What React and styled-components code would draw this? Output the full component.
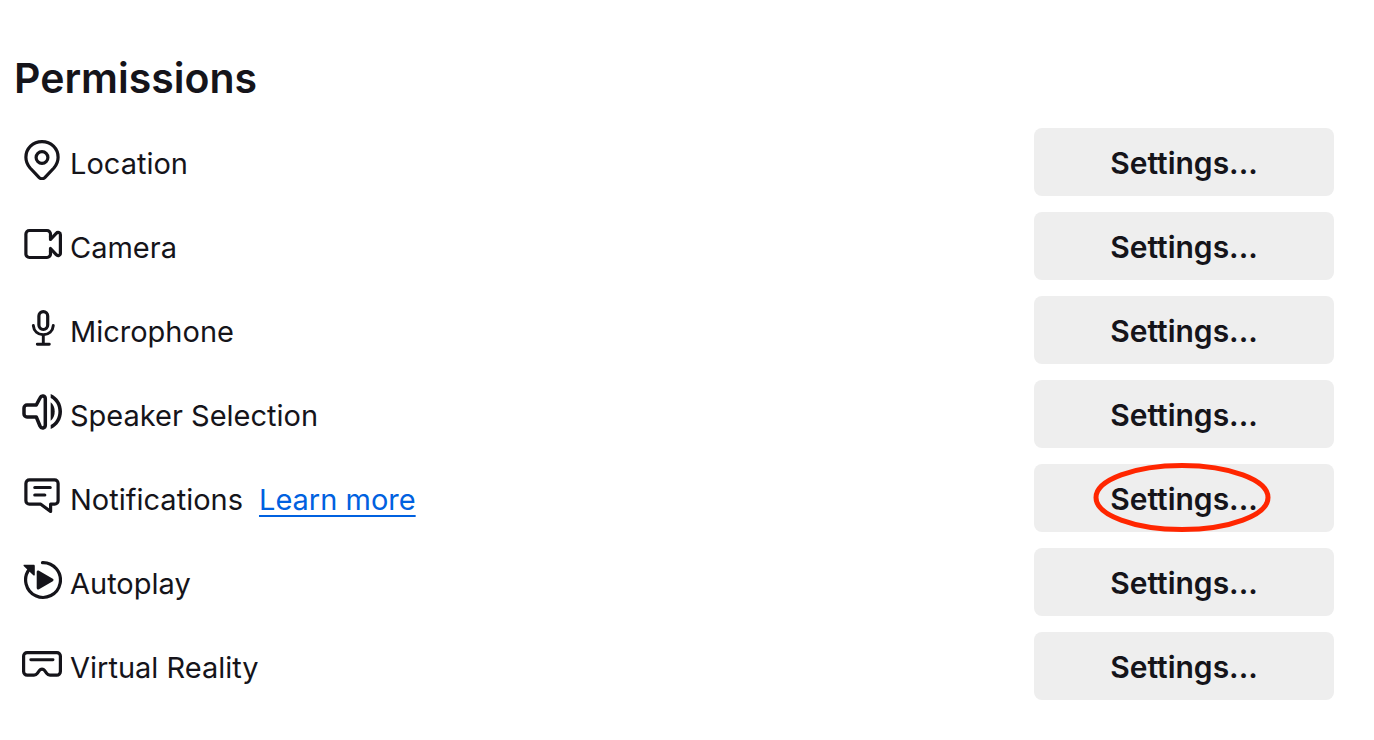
import React from 'react'
import styled, { createGlobalStyle } from 'styled-components';

const GlobalStyle = createGlobalStyle`
*{
  box-sizing: border-box;
}
body{
  margin: 0;
  background-color: #ffffff;
  color: #15141a;
  font-family: Inter, "Liberation Sans", sans-serif;
}
`;

const Page = styled.main`
  padding: 48px 40px 40px 14px;
`;

const Title = styled.h1`
  margin: 0 0 20px 0;
  font-size: 41px;
  line-height: 60px;
  font-weight: 600;
`;

const List = styled.ul`
  margin: 0;
  padding: 0 0 0 8px;
  list-style: none;
  display: flex;
  flex-direction: column;
  gap: 16px;
`;

const Row = styled.li`
  display: flex;
  justify-content: space-between;
  align-items: center;
`;

const Label = styled.div`
  padding-top: 4px;
  display: flex;
  align-items: center;
  gap: 8px;
  font-size: 29px;
  line-height: 40px;
`;

const Icon = styled.svg`
  margin-bottom: 8px;
  width: 40px;
  height: 40px;
  flex: none;
  fill: none;
  stroke: currentColor;
  stroke-width: 3.2;
  stroke-linecap: round;
  stroke-linejoin: round;
  .solid{
    fill: currentColor;
    stroke: none;
  }
`;

const LearnMore = styled.a`
  margin-left: 8px;
  color: #0061e0;
  text-decoration: underline;
  text-decoration-thickness: 2px;
  text-underline-offset: 5px;
`;

const SettingsButton = styled.button`
  position: relative;
  width: 300px;
  height: 68px;
  padding: 2px 0 0 0;
  border: 0;
  border-radius: 8px;
  background-color: #eeeeee;
  color: inherit;
  font-family: inherit;
  font-size: 30px;
  line-height: 40px;
  font-weight: 600;
  &:hover{
    cursor: pointer;
    background-color: #e0e0e6;
  }
`;

const Ring = styled.svg`
  position: absolute;
  top: -2px;
  left: 59px;
  width: 178px;
  height: 71px;
  fill: none;
  stroke: #ff2600;
  stroke-width: 5;
  pointer-events: none;
`;

const icons = {
  location: (
    <>
      <path d="M20 1.6C10.8 1.6 3.9 8.6 3.9 17.3c0 4.300 1.600 7.700 4.200 10.700l9.100 9.600c1.600 1.500 4 1.500 5.600 0l9.100-9.600c2.600-3 4.200-6.400 4.200-10.700C36.100 8.600 29.200 1.600 20 1.600z" />
      <circle cx="20" cy="17.5" r="5.9" />
    </>
  ),
  camera: (
    <>
      <path d="M28.5 13V10A3.5 3.5 0 0 0 25 6.5H7.4A3.5 3.5 0 0 0 3.9 10v20a3.5 3.5 0 0 0 3.5 3.5H25a3.5 3.5 0 0 0 3.5-3.5V27" />
      <path d="M28.500 12.500v3l5.700-6.200c1.600-1.700 4.200-.8 4.200 1.400v18.600c0 2.200-2.600 3.100-4.200 1.400l-5.700-6.200v3" />
    </>
  ),
  microphone: (
    <>
      <rect x="16.9" y="3.7" width="8.8" height="17.8" rx="4.4" />
      <path d="M11.3 17.5c.5 5.500 4.500 9.200 10 9.200s9.500-3.700 10-9.200M21.3 27v9M15.3 36.3h12" strokeWidth="2.9" />
    </>
  ),
  speaker: (
    <>
      <path d="M14.300 13H5a3 3 0 0 0-3 3v6a3 3 0 0 0 3 3h9.300l3.700 9c1.400 3.100 5.300 2.400 5.300-1V7c0-3.400-3.900-4.100-5.300-1z" strokeWidth="3.5" />
      <path className="solid" d="M28.700 10.200c2.700 2.200 4 5.500 4 9.300s-1.300 7.100-4 9.300z" />
      <path className="solid" d="M28.700 2C35.800 5 40 11.800 40 19.500S35.800 34 28.700 37v-3.900c4.900-2.700 7.700-7.600 7.700-13.600s-2.800-10.900-7.700-13.600z" />
    </>
  ),
  notifications: (
    <>
      <path d="M7.400 3.900h25.200a3.500 3.500 0 0 1 3.500 3.500v17.300a3.500 3.500 0 0 1-3.500 3.500h-4v7.300l-9.800-7.300H7.400a3.500 3.500 0 0 1-3.500-3.500V7.400a3.500 3.500 0 0 1 3.500-3.500z" />
      <path d="M12.800 11.500h15.400M12.800 19h10" />
    </>
  ),
  autoplay: (
    <>
      <path d="M20.500 2.600A17.400 17.400 0 1 1 7.300 9.300" />
      <path className="solid" d="M2.300 4.700h9.200c.8 0 1.300.5 1.300 1.300v8.700c0 .9-.9 1.200-1.500.6L1.700 5.900c-.4-.6-.1-1.200.6-1.200z" />
      <path className="solid" d="M14.700 12v16c0 1.300 1.200 1.900 2.300 1.200l13.800-8c1-.6 1-1.800 0-2.400l-13.800-8c-1.100-.7-2.300-.1-2.300 1.200z" />
    </>
  ),
  vr: (
    <>
      <path d="M5.100 8.600h29.800a3.500 3.500 0 0 1 3.500 3.500v15.400a3.600 3.600 0 0 1-3.600 3.600H28c-1.500 0-2.500-.6-3.300-1.700l-2.200-3c-1.300-1.700-3.700-1.700-5 0l-2.200 3c-.8 1.100-1.800 1.700-3.300 1.700H5.200a3.600 3.600 0 0 1-3.600-3.600V12.100a3.500 3.500 0 0 1 3.500-3.500z" />
      <path d="M8.800 15.700H31" strokeWidth="2.900" />
    </>
  ),
};

const permissions = [
  { id: 'location', label: 'Location' },
  { id: 'camera', label: 'Camera' },
  { id: 'microphone', label: 'Microphone' },
  { id: 'speaker', label: 'Speaker Selection' },
  { id: 'notifications', label: 'Notifications', learnMore: true, circled: true },
  { id: 'autoplay', label: 'Autoplay' },
  { id: 'vr', label: 'Virtual Reality' },
];

const App = () => {
  return (
    <Page>
      <GlobalStyle />
      <Title>Permissions</Title>
      <List>
        {permissions.map(({ id, label, learnMore, circled }) => (
          <Row key={id}>
            <Label>
              <Icon viewBox="0 0 40 40" aria-hidden="true">{icons[id]}</Icon>
              <span id={`${id}-label`}>{label}</span>
              {learnMore && <LearnMore href="#notifications">Learn more</LearnMore>}
            </Label>
            <SettingsButton type="button" aria-describedby={`${id}-label`}>
              Settings...
              {circled && (
                <Ring viewBox="0 0 178 71" aria-hidden="true">
                  <ellipse cx="89" cy="35.5" rx="86" ry="32" />
                </Ring>
              )}
            </SettingsButton>
          </Row>
        ))}
      </List>
    </Page>
  )
}

export default App;
